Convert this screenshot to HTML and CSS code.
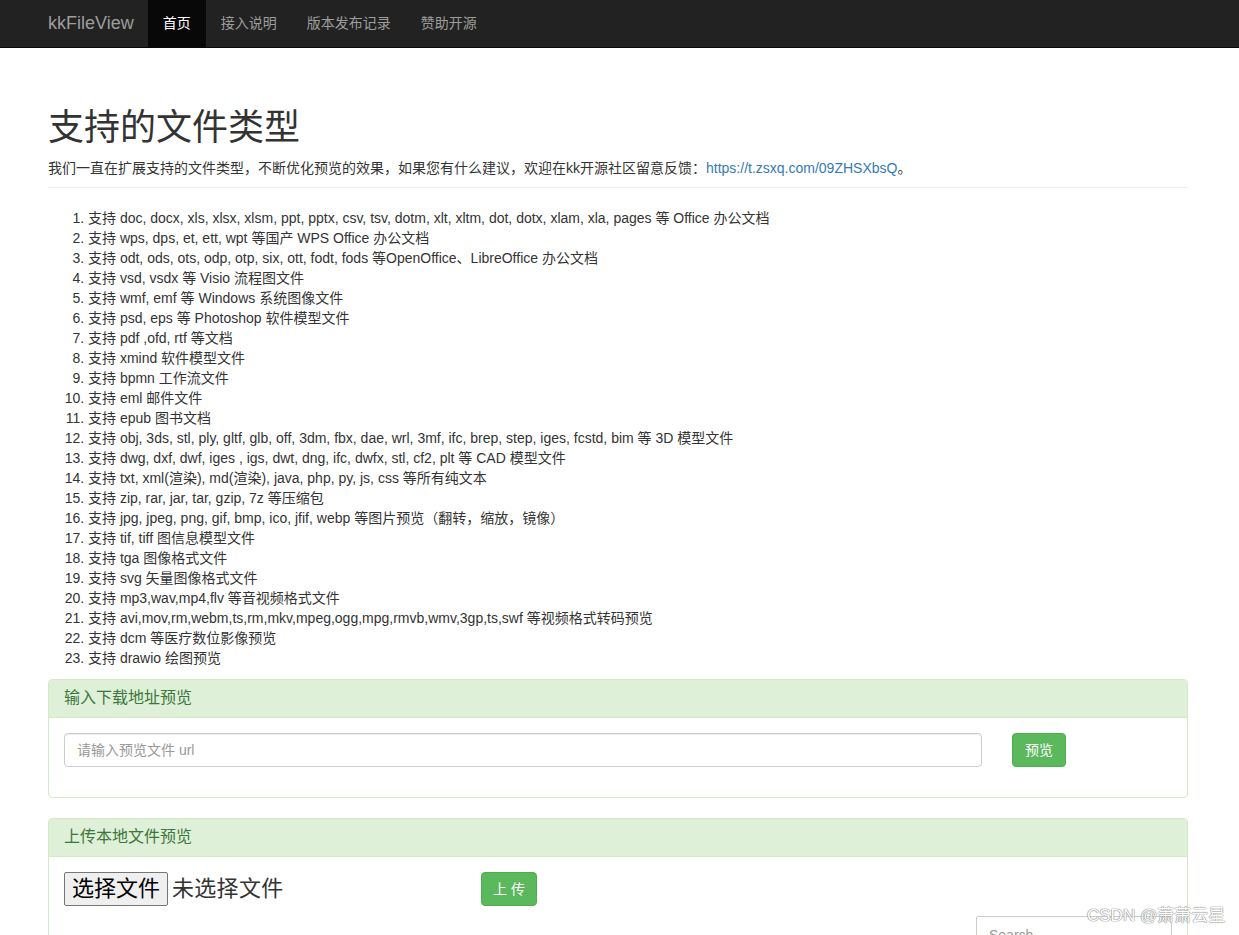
FILE: index.html
```html
<!DOCTYPE html>
<html lang="zh-CN">
<head>
<meta charset="utf-8">
<title>kkFileView</title>
<link rel="stylesheet" href="styles.css">
</head>
<body>
<nav class="navbar">
  <div class="navbar-inner">
    <a class="brand" href="#">kkFileView</a>
    <ul class="nav">
      <li class="active"><a href="#">首页</a></li>
      <li><a href="#">接入说明</a></li>
      <li><a href="#">版本发布记录</a></li>
      <li><a href="#">赞助开源</a></li>
    </ul>
  </div>
</nav>

<div class="container">
  <div class="page-header">
    <h1>支持的文件类型</h1>
    <p>我们一直在扩展支持的文件类型，不断优化预览的效果，如果您有什么建议，欢迎在kk开源社区留意反馈：<a href="#">https://t.zsxq.com/09ZHSXbsQ</a>。</p>
  </div>

  <ol class="types">
    <li>支持 doc, docx, xls, xlsx, xlsm, ppt, pptx, csv, tsv, dotm, xlt, xltm, dot, dotx, xlam, xla, pages 等 Office 办公文档</li>
    <li>支持 wps, dps, et, ett, wpt 等国产 WPS Office 办公文档</li>
    <li>支持 odt, ods, ots, odp, otp, six, ott, fodt, fods 等OpenOffice、LibreOffice 办公文档</li>
    <li>支持 vsd, vsdx 等 Visio 流程图文件</li>
    <li>支持 wmf, emf 等 Windows 系统图像文件</li>
    <li>支持 psd, eps 等 Photoshop 软件模型文件</li>
    <li>支持 pdf ,ofd, rtf 等文档</li>
    <li>支持 xmind 软件模型文件</li>
    <li>支持 bpmn 工作流文件</li>
    <li>支持 eml 邮件文件</li>
    <li>支持 epub 图书文档</li>
    <li>支持 obj, 3ds, stl, ply, gltf, glb, off, 3dm, fbx, dae, wrl, 3mf, ifc, brep, step, iges, fcstd, bim 等 3D 模型文件</li>
    <li>支持 dwg, dxf, dwf, iges , igs, dwt, dng, ifc, dwfx, stl, cf2, plt 等 CAD 模型文件</li>
    <li>支持 txt, xml(渲染), md(渲染), java, php, py, js, css 等所有纯文本</li>
    <li>支持 zip, rar, jar, tar, gzip, 7z 等压缩包</li>
    <li>支持 jpg, jpeg, png, gif, bmp, ico, jfif, webp 等图片预览（翻转，缩放，镜像）</li>
    <li>支持 tif, tiff 图信息模型文件</li>
    <li>支持 tga 图像格式文件</li>
    <li>支持 svg 矢量图像格式文件</li>
    <li>支持 mp3,wav,mp4,flv 等音视频格式文件</li>
    <li>支持 avi,mov,rm,webm,ts,rm,mkv,mpeg,ogg,mpg,rmvb,wmv,3gp,ts,swf 等视频格式转码预览</li>
    <li>支持 dcm 等医疗数位影像预览</li>
    <li>支持 drawio 绘图预览</li>
  </ol>

  <div class="panel">
    <div class="panel-heading"><h3 class="panel-title">输入下载地址预览</h3></div>
    <div class="panel-body">
      <form class="url-form">
        <div class="url-col"><input class="form-control" type="text" placeholder="请输入预览文件 url"></div>
        <div class="btn-col"><button type="button" class="btn">预览</button></div>
      </form>
    </div>
  </div>

  <div class="panel">
    <div class="panel-heading"><h3 class="panel-title">上传本地文件预览</h3></div>
    <div class="panel-body upload-body">
      <div class="file-input">
        <span class="file-btn">选择文件</span><span class="file-name">未选择文件</span>
      </div>
      <button type="button" class="btn btn-upload">上 传</button>
    </div>
  </div>
</div>

<div class="search-box">Search</div>
<div class="watermark">CSDN @萧萧云星</div>
</body>
</html>
```

FILE: styles.css
```css
html { overflow: hidden; }
body {
  margin: 0;
  font-family: "Liberation Sans", Arial, "Noto Sans CJK SC", sans-serif;
  font-size: 14px;
  line-height: 20px;
  color: #333;
  background: #fff;
}
a { color: #337ab7; text-decoration: none; }

.navbar {
  background: #222;
  border-bottom: 1px solid #080808;
  height: 47px;
}
.navbar-inner {
  display: flex;
  align-items: stretch;
  height: 47px;
  padding-left: 33px;
}
.brand {
  color: #9d9d9d;
  font-size: 18px;
  padding: 0 14px 2px 15px;
  display: flex;
  align-items: center;
  line-height: 20px;
}
.nav {
  list-style: none;
  margin: 0;
  padding: 0;
  display: flex;
}
.nav li a {
  display: flex;
  align-items: center;
  height: 100%;
  padding: 0 15px 1px;
  color: #9d9d9d;
  box-sizing: border-box;
}
.nav li.active a {
  background: #080808;
  color: #fff;
}

.container {
  width: 1140px;
  margin-left: 48px;
}
.page-header {
  margin: 60px 0 20px;
  padding-bottom: 9px;
  border-bottom: 1px solid #eee;
}
.page-header h1 {
  margin: 0 0 10px;
  font-size: 36px;
  font-weight: 400;
  line-height: 40px;
  color: #333;
}
.page-header p { margin: 0; font-size: 14px; }

.types {
  margin: 0 0 11px;
  padding-left: 40px;
}

.panel {
  border: 1px solid #d6e9c6;
  border-radius: 4px;
  margin-bottom: 20px;
  background: #fff;
}
.panel-heading {
  background: #dff0d8;
  color: #3c763d;
  border-bottom: 1px solid #d6e9c6;
  border-radius: 3px 3px 0 0;
  padding: 9px 15px 10px;
}
.panel-title {
  margin: 0;
  font-size: 16px;
  font-weight: 400;
  line-height: 18px;
}
.panel-body { padding: 15px; }

.url-form {
  display: flex;
  margin: 0 -15px 15px;
}
.url-col { width: 948px; padding: 0 15px; box-sizing: border-box; }
.btn-col { padding: 0 15px; }
.form-control {
  display: block;
  width: 100%;
  height: 34px;
  box-sizing: border-box;
  padding: 6px 12px;
  font: inherit;
  color: #555;
  border: 1px solid #ccc;
  border-radius: 4px;
  box-shadow: inset 0 1px 1px rgba(0,0,0,.075);
  outline: none;
}
.form-control::placeholder { color: #999; }

.btn {
  height: 34px;
  padding: 6px 12px;
  font: inherit;
  color: #fff;
  background: #5cb85c;
  border: 1px solid #4cae4c;
  border-radius: 4px;
  line-height: 20px;
}

.upload-body {
  display: flex;
  align-items: flex-start;
  height: 60px;
}
.file-input {
  width: 417px;
  display: flex;
  align-items: center;
  font-size: 22px;
  line-height: 28px;
  color: #222;
}
.file-btn {
  display: inline-block;
  background: #efefef;
  border: 1px solid #767676;
  border-radius: 2px;
  padding: 2px 7px;
  margin-right: 4px;
  color: #000;
}
.file-name { color: #333; letter-spacing: 0.3px; }
.btn-upload { padding: 6px 11px; }

.search-box {
  position: absolute;
  left: 976px;
  top: 916px;
  width: 196px;
  height: 36px;
  box-sizing: border-box;
  border: 1px solid #ccc;
  border-radius: 2px;
  background: #fff;
  color: #999;
  padding: 8px 12px;
  font-size: 14px;
}
.watermark {
  position: absolute;
  left: 1087px;
  top: 904px;
  font-size: 17px;
  line-height: 24px;
  color: #fff;
  text-shadow: 0 0 1px #888, 0 0 1px #888, 0 0 1px #888;
}
```
